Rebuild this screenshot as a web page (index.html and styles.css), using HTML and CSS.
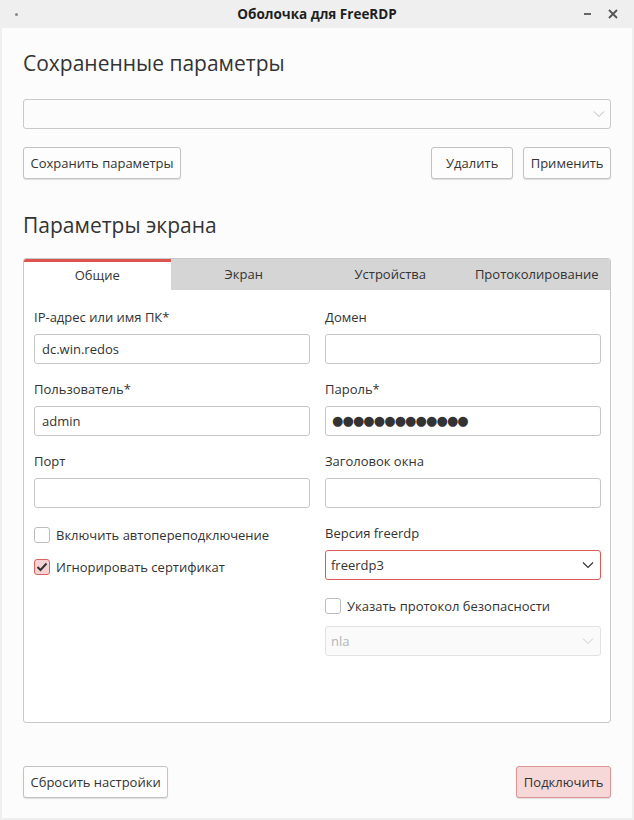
FILE: index.html
```html
<!DOCTYPE html>
<html lang="ru">
<head>
<meta charset="utf-8">
<title>Оболочка для FreeRDP</title>
<link rel="stylesheet" href="styles.css">
</head>
<body>
<div class="titlebar">
  <span class="tb-dot"></span>
  <span class="tb-title">Оболочка для FreeRDP</span>
  <span class="tb-controls">
    <span class="tb-min"></span>
    <svg class="tb-close" width="10" height="10" viewBox="0 0 10 10"><path d="M1 1L9 9M9 1L1 9" stroke="#555" stroke-width="1.8"/></svg>
  </span>
</div>
<div class="window">
  <h1 class="heading h-first">Сохраненные параметры</h1>
  <div class="combo">
    <span class="combo-text"></span>
    <svg class="chev" width="12" height="8" viewBox="0 0 12 8"><path d="M1 1.5L6 6.5L11 1.5" fill="none" stroke="#bbb" stroke-width="1"/></svg>
  </div>
  <div class="btn-row">
    <button class="btn">Сохранить параметры</button>
    <div class="spacer"></div>
    <button class="btn">Удалить</button>
    <button class="btn">Применить</button>
  </div>
  <h1 class="heading h-second">Параметры экрана</h1>
  <div class="tabs">
    <div class="tabbar">
      <div class="tab active">Общие</div>
      <div class="tab">Экран</div>
      <div class="tab">Устройства</div>
      <div class="tab">Протоколирование</div>
    </div>
    <div class="panel">
      <div class="col">
        <div class="field">
          <label class="lbl">IP-адрес или имя ПК*</label>
          <div class="input">dc.win.redos</div>
        </div>
        <div class="field">
          <label class="lbl">Пользователь*</label>
          <div class="input">admin</div>
        </div>
        <div class="field">
          <label class="lbl">Порт</label>
          <div class="input"></div>
        </div>
        <div class="checks">
          <div class="check"><span class="box"></span><span>Включить автопереподключение</span></div>
          <div class="check"><span class="box checked"><svg width="12" height="10" viewBox="0 0 12 10"><path d="M1.5 5L4.5 8L10.5 1.5" fill="none" stroke="#333" stroke-width="2"/></svg></span><span>Игнорировать сертификат</span></div>
        </div>
      </div>
      <div class="col">
        <div class="field">
          <label class="lbl">Домен</label>
          <div class="input"></div>
        </div>
        <div class="field">
          <label class="lbl">Пароль*</label>
          <div class="input pwd"><span class="dots">●●●●●●●●●●●●●</span></div>
        </div>
        <div class="field">
          <label class="lbl">Заголовок окна</label>
          <div class="input"></div>
        </div>
        <div class="field">
          <label class="lbl">Версия freerdp</label>
          <div class="input select focus">
            <span>freerdp3</span>
            <svg class="chev" width="12" height="8" viewBox="0 0 12 8"><path d="M1 1.5L6 6.5L11 1.5" fill="none" stroke="#333" stroke-width="1.2"/></svg>
          </div>
        </div>
        <div class="check check-right"><span class="box"></span><span>Указать протокол безопасности</span></div>
        <div class="input select disabled">
          <span>nla</span>
          <svg class="chev" width="12" height="8" viewBox="0 0 12 8"><path d="M1 1.5L6 6.5L11 1.5" fill="none" stroke="#ccc" stroke-width="1"/></svg>
        </div>
      </div>
    </div>
  </div>
  <div class="btn-row bottom-row">
    <button class="btn">Сбросить настройки</button>
    <div class="spacer"></div>
    <button class="btn primary">Подключить</button>
  </div>
</div>
</body>
</html>
```
FILE: styles.css
```css
* { box-sizing: border-box; }
html, body {
  margin: 0;
  padding: 0;
  background: #efefef;
  font-family: "Open Sans", "Noto Sans", sans-serif;
  font-size: 13px;
  color: #333;
}
.titlebar {
  height: 28px;
  display: flex;
  align-items: center;
  justify-content: center;
  position: relative;
}
.tb-title {
  font-weight: 700;
  font-size: 13.5px;
  color: #1e1e1e;
}
.tb-dot {
  position: absolute;
  left: 15px;
  top: 13px;
  width: 3px;
  height: 3px;
  border-radius: 50%;
  background: #888;
}
.tb-controls {
  position: absolute;
  right: 16px;
  top: 9px;
  display: flex;
  align-items: center;
  gap: 17px;
}
.tb-min {
  display: block;
  width: 7px;
  height: 2px;
  background: #666;
}
.window {
  margin: 0 2px;
  height: 790px;
  background: #fcfcfc;
  padding: 20px 21px 20px 21px;
  display: flex;
  flex-direction: column;
}
.heading {
  margin: 0;
  font-weight: 400;
  font-size: 21px;
  line-height: 30px;
  color: #333;
}
.h-first { margin-bottom: 21px; }
.h-second { margin-top: 31px; margin-bottom: 18px; }
.combo {
  height: 30px;
  border: 1px solid #c9c9c9;
  border-radius: 3px;
  background: #fcfcfc;
  display: flex;
  align-items: center;
  justify-content: flex-end;
  padding-right: 5px;
}
.btn-row {
  display: flex;
  gap: 10px;
  margin-top: 18px;
}
.spacer { flex: 1; }
.btn {
  height: 32px;
  min-width: 82px;
  padding: 0 6.5px;
  font-family: inherit;
  font-size: 13px;
  color: #333;
  background: #fdfdfd;
  border: 1px solid #c3c3c3;
  border-radius: 3px;
  box-shadow: 0 1px 1px rgba(0,0,0,0.12);
}
.btn.primary {
  background: #f7d8d8;
  border-color: #dd9494;
}
.tabs {
  height: 466px;
  border: 1px solid #c9c9c9;
  border-radius: 3px;
  background: #fff;
  display: flex;
  flex-direction: column;
  overflow: hidden;
}
.tabbar {
  display: grid;
  grid-template-columns: repeat(4, 1fr);
  height: 31px;
  background: #d5d5d5;
}
.tab {
  display: flex;
  align-items: center;
  justify-content: center;
  color: #333;
}
.tab.active {
  background: #fff;
  border-top: 3px solid #dd5550;
  padding-bottom: 2px;
}
.panel {
  display: grid;
  grid-template-columns: 1fr 1fr;
  gap: 15px;
  padding: 17px 9px 0 10px;
}
.col {
  display: flex;
  flex-direction: column;
}
.field {
  display: flex;
  flex-direction: column;
  gap: 7px;
  margin-bottom: 15px;
}
.lbl {
  line-height: 20px;
  height: 20px;
}
.input {
  height: 30px;
  border: 1px solid #c6c6c6;
  border-radius: 3px;
  background: #fff;
  padding: 0 7px;
  display: flex;
  align-items: center;
  font-size: 13px;
  color: #333;
}
.pwd { padding-left: 6px; }
.dots {
  font-family: "DejaVu Sans", sans-serif;
  font-size: 13px;
  letter-spacing: -0.9px;
  color: #333;
  line-height: 1;
}
.select {
  justify-content: space-between;
  padding-left: 5px;
  padding-right: 6px;
}
.select.focus { border-color: #dd5c58; }
.select.disabled {
  background: #fafafa;
  border-color: #e2e2e2;
  color: #b5b5b5;
}
.checks {
  display: flex;
  flex-direction: column;
  gap: 8px;
}
.check {
  display: flex;
  align-items: center;
  gap: 6px;
  height: 24px;
}
.check-right { margin-top: -1px; margin-bottom: 8px; }
.box {
  width: 16px;
  height: 16px;
  border: 1px solid #bdbdbd;
  border-radius: 3px;
  background: #fff;
  display: flex;
  align-items: center;
  justify-content: center;
}
.box.checked {
  background: #f6d2d2;
  border-color: #d9625f;
}
.bottom-row { margin-top: 43px; }
```
